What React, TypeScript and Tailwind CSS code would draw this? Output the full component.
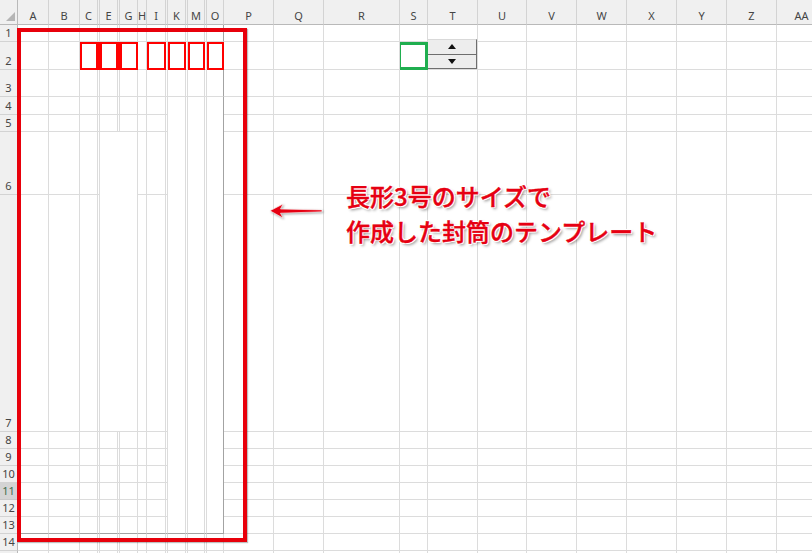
import React from "react";

const COLS = ["A","B","C","D","E","F","G","H","I","J","K","L","M","N","O","P","Q","R","S","T","U","V","W","X","Y","Z","AA"];
const NARROW = [3, 5, 9, 11, 13];
const NROWS = 15;

const MERGE_ANCHORS: Record<string, string> = {
  "6-4": "col-span-3 row-span-2",
  "4-10": "row-span-10",
  "4-11": "row-span-10",
  "4-12": "row-span-10",
  "4-13": "row-span-10",
  "4-14": "row-span-10",
};

function covered(r: number, c: number): boolean {
  if (r >= 6 && r <= 7 && c >= 4 && c <= 6 && !(r === 6 && c === 4)) return true;
  if (r >= 5 && r <= 13 && c >= 10 && c <= 14) return true;
  return false;
}

const BOX_COLS = [2, 4, 6, 8, 10, 12, 14];

function SpinButton() {
  return (
    <div className="absolute -top-[3px] left-0 right-0 bottom-0 flex flex-col bg-[#ededed] border-t border-t-[#d9d9d9] border-r border-r-[#6e6e6e]">
      <div className="flex-1 flex items-center justify-center border-b border-b-[#6e6e6e]">
        <svg width="8" height="5" viewBox="0 0 8 5">
          <polygon points="4,0 8,5 0,5" fill="#111" />
        </svg>
      </div>
      <div className="flex-1 flex items-center justify-center border-b border-b-[#6e6e6e]">
        <svg width="8" height="5" viewBox="0 0 8 5">
          <polygon points="0,0 8,0 4,5" fill="#111" />
        </svg>
      </div>
    </div>
  );
}

function Cell({ r, c }: { r: number; c: number }) {
  const key = `${r}-${c}`;
  const span = MERGE_ANCHORS[key] ?? "";
  const inEnv = r <= 13 && c <= 14;
  const cls: string[] = [span];
  if (r === 2 && BOX_COLS.includes(c)) {
    cls.push("bg-white border-2 border-[#ff0000]");
  } else if (r === 2 && (c === 3 || c === 5)) {
    cls.push("bg-[#ff0000]");
  } else if (r === 2 && c === 18) {
    cls.push("bg-white border-[3px] border-[#1fae4f] -ml-[2px]");
  } else {
    cls.push("relative bg-white border-r border-b");
    if (inEnv && c === 14) cls.push("border-r-[#a3a3a3]");
    else cls.push("border-r-[#dcdcdc]");
    const bottomDark = inEnv && (r === 13 || (r === 4 && c >= 10));
    if (bottomDark) cls.push("border-b-[#a3a3a3]");
    else cls.push("border-b-[#dcdcdc]");
  }
  return <div className={cls.join(" ")}>{r === 2 && c === 19 ? <SpinButton /> : null}</div>;
}

function ColHeader({ label }: { label: string }) {
  return (
    <div className="bg-[#f0f0f0] border-r border-r-[#d3d3d3] border-b border-b-[#b9b9b9] flex items-center justify-center pt-[6px] overflow-hidden text-[11px] text-[#454545] font-['Noto_Sans',sans-serif] leading-none">
      {label}
    </div>
  );
}

function RowHeader({ n }: { n: number }) {
  const active = n === 11;
  const label = n <= 14 ? n : "";
  return (
    <div
      className={
        active
          ? "bg-[#d4d4d4] border-r border-r-[#b9b9b9] border-b border-b-[#c8c8c8] flex items-end justify-center pb-[2px] text-[11px] text-[#3f6b4c] font-['Noto_Sans',sans-serif] leading-[13px]"
          : "bg-[#f0f0f0] border-r border-r-[#b9b9b9] border-b border-b-[#d3d3d3] flex items-end justify-center pb-[2px] text-[11px] text-[#454545] font-['Noto_Sans',sans-serif] leading-[13px]"
      }
    >
      {label}
    </div>
  );
}

export default function App() {
  const items: React.ReactNode[] = [];
  items.push(
    <div key="corner" className="relative bg-[#f0f0f0] border-r border-r-[#b9b9b9] border-b border-b-[#b9b9b9]">
      <svg className="absolute right-[2px] bottom-[3px]" width="9" height="9" viewBox="0 0 9 9">
        <polygon points="9,0 9,9 0,9" fill="#b5b5b5" />
      </svg>
    </div>
  );
  COLS.forEach((l, i) =>
    items.push(<ColHeader key={`h-${l}`} label={NARROW.includes(i) ? "" : l} />)
  );
  for (let r = 1; r <= NROWS; r++) {
    items.push(<RowHeader key={`rh-${r}`} n={r} />);
    for (let c = 0; c < COLS.length; c++) {
      if (covered(r, c)) continue;
      items.push(<Cell key={`c-${r}-${c}`} r={r} c={c} />);
    }
  }

  return (
    <div className="relative w-[812px] h-[553px] overflow-hidden bg-white">
      <div className="grid w-max grid-cols-[18px_31px_31px_18px_2px_18px_2px_18px_9px_19px_2px_18px_2px_17px_2px_17px_50px_50px_76px_28px_50px_49px_50px_50px_50px_50px_50px_50px] grid-rows-[25px_17px_28px_27px_18px_17px_63px_237px_17px_17px_17px_17px_17px_17px_17px_17px]">
        {items}
      </div>

      {/* red outline shape drawn over the envelope */}
      <div className="absolute left-[17px] top-[28px] w-[230px] h-[514px] border-4 border-[#e8000b] shadow-[1px_1px_1px_rgba(0,0,0,0.25)]" />

      {/* arrow shape */}
      <svg className="absolute left-[266px] top-[200px] drop-shadow-[1px_1px_1px_rgba(0,0,0,0.35)]" width="60" height="22" viewBox="0 0 60 22">
        <polygon points="4,10.8 17,4 14.5,9 56,9.9 56,11.8 14.5,13.2 17,18" fill="#e60012" stroke="#ffffff" strokeWidth="0.6" strokeLinejoin="round" />
      </svg>

      {/* annotation text box */}
      <div className="absolute left-[346px] top-[178px] text-[24px] leading-[35px] font-medium text-[#e60012] font-['Noto_Sans_CJK_JP',sans-serif] whitespace-nowrap [-webkit-text-stroke:0.4px_#e60012] [text-shadow:1px_1px_0_#fff,-1px_-1px_0_#fff,1px_-1px_0_#fff,-1px_1px_0_#fff,0_1px_0_#fff,1px_0_0_#fff,0_-1px_0_#fff,-1px_0_0_#fff,2px_2px_3px_rgba(0,0,0,0.45)]">
        <div>長形3号のサイズで</div>
        <div>作成した封筒のテンプレート</div>
      </div>
    </div>
  );
}
